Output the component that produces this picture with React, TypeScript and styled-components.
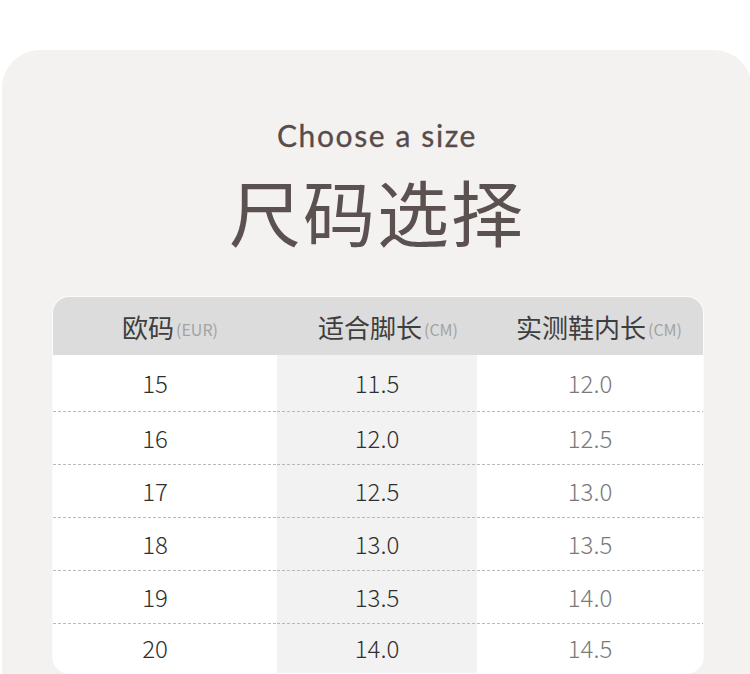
import React from "react";
import styled, { createGlobalStyle } from "styled-components";

const GlobalStyle = createGlobalStyle`
  html, body { margin: 0; padding: 0; background: #ffffff; }
  body { font-family: "Noto Sans CJK SC", "Noto Sans", sans-serif; overflow: hidden; }
`;

const Page = styled.div`
  width: 750px;
  height: 674px;
  padding-top: 50px;
  box-sizing: border-box;
  overflow: hidden;
`;

const Card = styled.section`
  margin-left: 2px;
  width: 750px;
  height: 624px;
  box-sizing: border-box;
  background: #f3f2f0;
  border-radius: 38px 38px 0 0;
  padding-top: 67px;
  display: flex;
  flex-direction: column;
`;

const EnTitle = styled.div`
  text-align: center;
  font-family: "Lato", "Liberation Sans", sans-serif;
  font-size: 30px;
  line-height: 36px;
  letter-spacing: 1.6px;
  color: #574c49;
  -webkit-text-stroke: 0.3px #574c49;
`;

const CnTitle = styled.h1`
  margin: 17px 0 0;
  text-align: center;
  font-family: "Noto Sans CJK SC", sans-serif;
  font-weight: 400;
  font-size: 72px;
  line-height: 80px;
  letter-spacing: 2px;
  color: #5b5150;
`;

const Table = styled.div`
  margin: 47px 0 0 51px;
  width: 650px;
  background: #ffffff;
  border-radius: 16px;
  overflow: hidden;
  box-shadow: 0 0 0 1px #fbfbfb;
  display: grid;
  grid-template-columns: 224px 200px 226px;
`;

const headShift = [10, 22, 18];
const bodyShift = [-20, 0, 0];

const HeadCell = styled.div<{ $col: number }>`
  height: 58px;
  background: #dcdcdc;
  display: flex;
  align-items: center;
  justify-content: center;
  font-size: 26px;
  color: #3e3e3e;
  font-weight: 400;
  padding-top: 1px;
  padding-left: ${(p) => headShift[p.$col]}px;
  box-sizing: border-box;
`;

const Unit = styled.span`
  font-size: 16px;
  color: #a3a3a3;
  margin-left: 2px;
  margin-top: 4px;
`;

const Cell = styled.div<{ $col: number; $h: number; $last: boolean }>`
  height: ${(p) => p.$h}px;
  display: flex;
  align-items: center;
  justify-content: center;
  font-size: 24px;
  font-weight: 300;
  color: ${(p) => (p.$col === 2 ? "#7a7a7a" : "#2f2f2f")};
  background-color: ${(p) => (p.$col === 1 ? "#f2f2f2" : "#ffffff")};
  background-image: ${(p) =>
    p.$last ? "none" : "linear-gradient(to right, #b9b9b9 62%, transparent 62%)"};
  background-size: 5px 1px;
  background-repeat: repeat-x;
  background-position: left bottom;
  box-sizing: border-box;
  padding-bottom: 2px;
  padding-left: ${(p) => Math.max(0, bodyShift[p.$col])}px;
  padding-right: ${(p) => Math.max(0, -bodyShift[p.$col])}px;
`;

const headers: [string, string][] = [
  ["欧码", "(EUR)"],
  ["适合脚长", "(CM)"],
  ["实测鞋内长", "(CM)"],
];

const rows = [
  ["15", "11.5", "12.0"],
  ["16", "12.0", "12.5"],
  ["17", "12.5", "13.0"],
  ["18", "13.0", "13.5"],
  ["19", "13.5", "14.0"],
  ["20", "14.0", "14.5"],
];

export default function App() {
  return (
    <>
      <GlobalStyle />
      <Page>
        <Card>
          <EnTitle>Choose a size</EnTitle>
          <CnTitle>尺码选择</CnTitle>
          <Table>
            {headers.map(([t, u], j) => (
              <HeadCell key={t} $col={j}>
                {t}
                <Unit>{u}</Unit>
              </HeadCell>
            ))}
            {rows.map((r, i) =>
              r.map((v, j) => (
                <Cell
                  key={`${i}-${j}`}
                  $col={j}
                  $h={i === 0 ? 57 : i === rows.length - 1 ? 49 : 53}
                  $last={i === rows.length - 1}
                >
                  {v}
                </Cell>
              ))
            )}
          </Table>
        </Card>
      </Page>
    </>
  );
}
